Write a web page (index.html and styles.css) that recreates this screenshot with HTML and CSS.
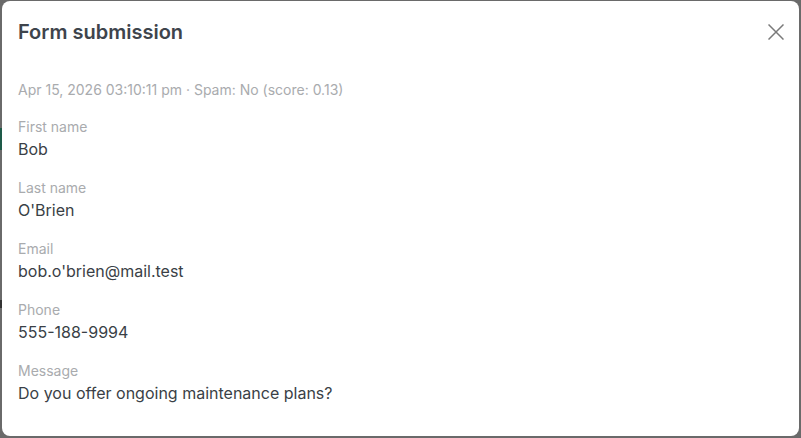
FILE: index.html
```html
<!DOCTYPE html>
<html lang="en">
<head>
    <meta charset="UTF-8">
    <meta name="viewport" content="width=device-width, initial-scale=1.0">
    <title>Form submission</title>
    <link rel="stylesheet" href="styles.css">
</head>
<body>
    <div class="backdrop">
        <div class="page-bits">
            <span class="bit bit-green"></span>
            <span class="bit bit-dark"></span>
        </div>
        <div class="modal">
            <div class="modal-header">
                <h2>Form submission</h2>
                <button class="close" aria-label="Close">
                    <svg width="16" height="16" viewBox="0 0 16 16">
                        <path d="M0.5 0.5L15.5 15.5M15.5 0.5L0.5 15.5" stroke="#7a7a7a" stroke-width="1.5" fill="none"/>
                    </svg>
                </button>
            </div>

            <p class="meta">Apr 15, 2026 03:10:11 pm · Spam: No (score: 0.13)</p>

            <div class="fields">
                <div class="field">
                    <div class="label">First name</div>
                    <div class="value">Bob</div>
                </div>
                <div class="field">
                    <div class="label">Last name</div>
                    <div class="value">O'Brien</div>
                </div>
                <div class="field">
                    <div class="label">Email</div>
                    <div class="value">bob.o'brien@mail.test</div>
                </div>
                <div class="field">
                    <div class="label">Phone</div>
                    <div class="value">555-188-9994</div>
                </div>
                <div class="field">
                    <div class="label">Message</div>
                    <div class="value">Do you offer ongoing maintenance plans?</div>
                </div>
            </div>
        </div>
    </div>
</body>
</html>
```

FILE: styles.css
```css
html, body {
    margin: 0;
    height: 100%;
}
body {
    font-family: Inter, "Liberation Sans", sans-serif;
    background-color: #6a6a6a;
    overflow: hidden;
}
.backdrop {
    position: relative;
    height: 100%;
    padding: 1px 2px 2px 2px;
    box-sizing: border-box;
    display: flex;
}
/* bits of the page behind the overlay, showing at the left edge */
.page-bits {
    position: absolute;
    left: 0;
    top: 0;
    width: 2px;
    height: 100%;
}
.bit {
    position: absolute;
    left: 0;
    width: 2px;
}
.bit-green {
    top: 128px;
    height: 22px;
    background-color: #1e5a48;
}
.bit-dark {
    top: 300px;
    height: 8px;
    background-color: #333;
}
.modal {
    flex: 1;
    background-color: #fff;
    border-radius: 8px;
    padding: 17px 15px 0 16px;
}
.modal-header {
    display: flex;
    justify-content: space-between;
    align-items: flex-start;
}
.modal-header h2 {
    margin: 0;
    font-size: 20px;
    line-height: 28px;
    font-weight: 600;
    color: #3e444c;
}
.close {
    border: none;
    background: none;
    padding: 0;
    margin: 6px 0 0 0;
    width: 16px;
    height: 16px;
    cursor: pointer;
}
.close svg {
    display: block;
}
.meta {
    margin: 34px 0 17px 0;
    font-size: 14px;
    line-height: 20px;
    color: #a9abae;
}
.fields {
    display: flex;
    flex-direction: column;
    gap: 17px;
}
.label {
    font-size: 14px;
    line-height: 20px;
    color: #a9abae;
}
.value {
    font-size: 16px;
    line-height: 24px;
    color: #3a3f46;
}
```
